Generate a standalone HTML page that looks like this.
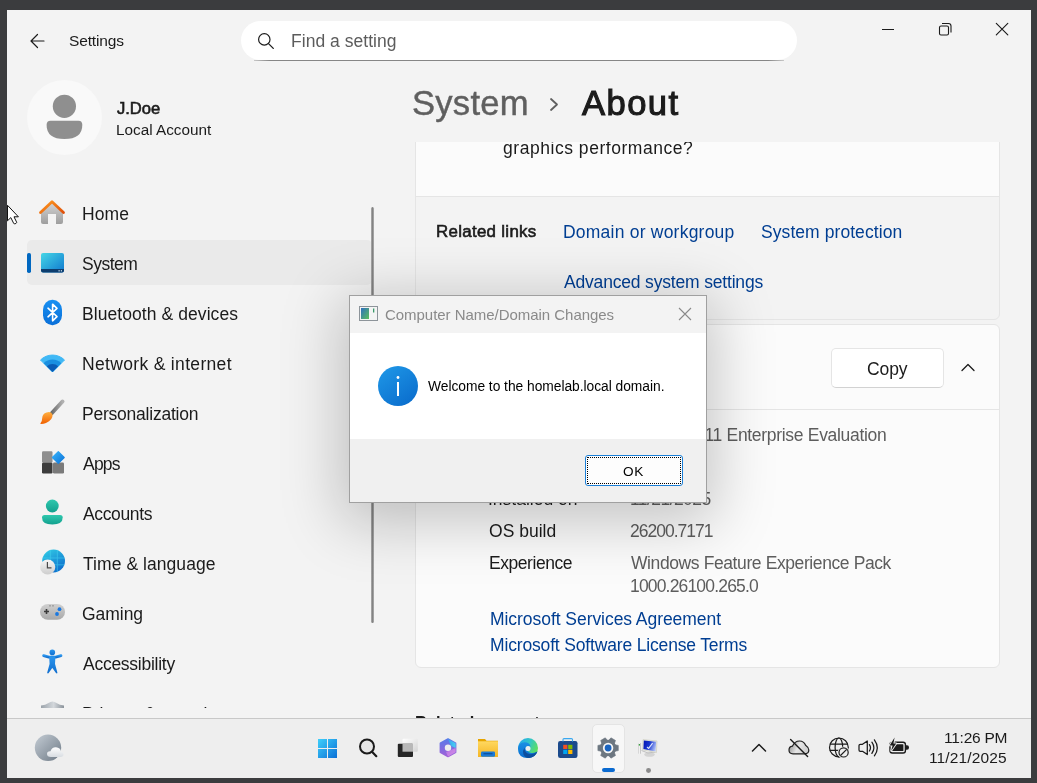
<!DOCTYPE html><html><head><meta charset="utf-8"><style>
html,body{margin:0;padding:0;}
body{width:1037px;height:783px;background:#3b3c3e;position:relative;overflow:hidden;font-family:"Liberation Sans", sans-serif;}
.t{position:absolute;white-space:nowrap;will-change:transform;}
</style></head><body>
<div style="position:absolute;left:7px;top:10px;width:1024px;height:768px;background:#f3f3f3;"></div>
<svg style="position:absolute;left:28px;top:32px;" width="18" height="18" viewBox="0 0 18 18"><path d="M3 9 H16 M3 9 L9.5 2.5 M3 9 L9.5 15.5" stroke="#1b1b1b" stroke-width="1.2" fill="none" stroke-linecap="round"/></svg>
<div class="t" style="left:69.20px;top:33px;font-size:15.5px;line-height:15.5px;color:#1b1b1b;font-weight:400;letter-spacing:-0.143px;">Settings</div>
<div style="position:absolute;left:241px;top:21px;width:556px;height:39px;background:#ffffff;border-radius:19.5px;"></div>
<div style="position:absolute;left:254px;top:60px;width:530px;height:1px;background:linear-gradient(90deg,#c8c8c8,#868686 3%,#868686 97%,#c8c8c8);"></div>
<svg style="position:absolute;left:256px;top:31px;" width="20" height="20" viewBox="0 0 20 20"><circle cx="8.3" cy="8.4" r="5.7" stroke="#1b1b1b" stroke-width="1.2" fill="none"/><path d="M12.5 12.6 L17.3 17.4" stroke="#1b1b1b" stroke-width="1.3" stroke-linecap="round"/></svg>
<div class="t" style="left:291.00px;top:33px;font-size:17.5px;line-height:17.5px;color:#5c5c5c;font-weight:400;letter-spacing:0.038px;">Find a setting</div>
<div style="position:absolute;left:882px;top:29px;width:12px;height:1px;background:#1b1b1b;"></div>
<svg style="position:absolute;left:936px;top:20px;" width="18" height="18" viewBox="0 0 18 18"><rect x="3.5" y="6" width="9" height="9" rx="1.5" stroke="#1b1b1b" stroke-width="1.1" fill="none"/><path d="M6 3.5 H12.5 Q15 3.5 15 6 V12.5" stroke="#1b1b1b" stroke-width="1.1" fill="none"/></svg>
<svg style="position:absolute;left:994px;top:21px;" width="16" height="16" viewBox="0 0 16 16"><path d="M2.3 2.3 L13.8 13.8 M13.8 2.3 L2.3 13.8" stroke="#1b1b1b" stroke-width="1.15" stroke-linecap="round"/></svg>
<div style="position:absolute;left:27px;top:80px;width:75px;height:75px;background:#f9f9f9;border-radius:50%;"></div>
<svg style="position:absolute;left:27px;top:80px;" width="75" height="75" viewBox="0 0 75 75"><circle cx="37.4" cy="26.3" r="11.6" fill="#8f8f8f"/><path d="M19.6 45 Q19.6 40.7 23.5 40.7 H51.5 Q55.3 40.7 55.3 45 Q55.3 59 37.4 59 Q19.6 59 19.6 45 Z" fill="#8f8f8f"/></svg>
<div class="t" style="left:117.30px;top:101px;font-size:16.6px;line-height:16.6px;color:#1b1b1b;font-weight:400;letter-spacing:-0.050px;-webkit-text-stroke:0.6px #1b1b1b;">J.Doe</div>
<div class="t" style="left:116.40px;top:122px;font-size:15.3px;line-height:15.3px;color:#1b1b1b;font-weight:400;">Local Account</div>
<div style="position:absolute;left:27px;top:240px;width:345px;height:45px;background:#eaeaea;border-radius:5px;"></div>
<div style="position:absolute;left:27px;top:253px;width:3.5px;height:20px;background:#0067c0;border-radius:1.75px;"></div>
<div style="position:absolute;left:0;top:0;width:380px;height:708px;overflow:hidden">
<div class="t" style="left:82.00px;top:206px;font-size:17.5px;line-height:17.5px;color:#1b1b1b;font-weight:400;letter-spacing:0.100px;">Home</div>
<div class="t" style="left:82.00px;top:256px;font-size:17.5px;line-height:17.5px;color:#1b1b1b;font-weight:400;letter-spacing:-0.500px;">System</div>
<div class="t" style="left:82.00px;top:306px;font-size:17.5px;line-height:17.5px;color:#1b1b1b;font-weight:400;letter-spacing:0.072px;">Bluetooth &amp; devices</div>
<div class="t" style="left:82.00px;top:356px;font-size:17.5px;line-height:17.5px;color:#1b1b1b;font-weight:400;letter-spacing:0.329px;">Network &amp; internet</div>
<div class="t" style="left:82.00px;top:406px;font-size:17.5px;line-height:17.5px;color:#1b1b1b;font-weight:400;letter-spacing:-0.229px;">Personalization</div>
<div class="t" style="left:83.00px;top:456px;font-size:17.5px;line-height:17.5px;color:#1b1b1b;font-weight:400;letter-spacing:-0.767px;">Apps</div>
<div class="t" style="left:83.00px;top:506px;font-size:17.5px;line-height:17.5px;color:#1b1b1b;font-weight:400;letter-spacing:-0.371px;">Accounts</div>
<div class="t" style="left:83.00px;top:556px;font-size:17.5px;line-height:17.5px;color:#1b1b1b;font-weight:400;letter-spacing:0.057px;">Time &amp; language</div>
<div class="t" style="left:82.00px;top:606px;font-size:17.5px;line-height:17.5px;color:#1b1b1b;font-weight:400;letter-spacing:-0.040px;">Gaming</div>
<div class="t" style="left:83.00px;top:656px;font-size:17.5px;line-height:17.5px;color:#1b1b1b;font-weight:400;letter-spacing:-0.258px;">Accessibility</div>
<div class="t" style="left:82.00px;top:706px;font-size:17.5px;line-height:17.5px;color:#1b1b1b;font-weight:400;">Privacy &amp; security</div>
</div>
<div style="position:absolute;left:371px;top:207px;width:3px;height:416px;background:linear-gradient(90deg,#bdbdbd,#838383 35%,#838383 65%,#bdbdbd);border-radius:1.5px;"></div>
<div class="t" style="left:411.70px;top:86px;font-size:34.6px;line-height:34.6px;color:#5f5f5f;font-weight:400;letter-spacing:0.260px;-webkit-text-stroke:0.45px #5f5f5f;">System</div>
<svg style="position:absolute;left:547px;top:96px;" width="14" height="16" viewBox="0 0 14 16"><path d="M4 3 L10 8.5 L4 14" stroke="#5f5f5f" stroke-width="1.8" fill="none" stroke-linecap="round" stroke-linejoin="round"/></svg>
<div class="t" style="left:582.10px;top:86px;font-size:34.6px;line-height:34.6px;color:#1b1b1b;font-weight:400;letter-spacing:1.425px;-webkit-text-stroke:1.1px #1b1b1b;">About</div>
<div style="position:absolute;left:380px;top:142px;width:651px;height:576px;overflow:hidden">
<div style="position:absolute;left:-380px;top:-142px;width:1037px;height:783px">
<div style="position:absolute;left:415px;top:100px;width:585px;height:220px;background:#f3f3f3;border:1px solid #e5e5e5;border-radius:6px;box-sizing:border-box;"></div>
<div style="position:absolute;left:416px;top:101px;width:583px;height:95px;background:#fbfbfb;"></div>
<div style="position:absolute;left:416px;top:196px;width:583px;height:1px;background:#e5e5e5;"></div>
<div class="t" style="left:503.20px;top:140px;font-size:17.5px;line-height:17.5px;color:#1b1b1b;font-weight:400;letter-spacing:0.540px;">graphics performance?</div>
<div class="t" style="left:436.10px;top:224px;font-size:16.9px;line-height:16.9px;color:#1b1b1b;font-weight:400;letter-spacing:0.300px;-webkit-text-stroke:0.6px #1b1b1b;">Related links</div>
<div class="t" style="left:562.50px;top:224px;font-size:17.5px;line-height:17.5px;color:#003e92;font-weight:400;letter-spacing:0.222px;">Domain or workgroup</div>
<div class="t" style="left:761.40px;top:224px;font-size:17.5px;line-height:17.5px;color:#003e92;font-weight:400;letter-spacing:0.069px;">System protection</div>
<div class="t" style="left:563.50px;top:274px;font-size:17.5px;line-height:17.5px;color:#003e92;font-weight:400;letter-spacing:-0.178px;">Advanced system settings</div>
<div style="position:absolute;left:415px;top:324px;width:585px;height:344px;background:#fbfbfb;border:1px solid #e5e5e5;border-radius:6px;box-sizing:border-box;"></div>
<div style="position:absolute;left:416px;top:409px;width:583px;height:1px;background:#e5e5e5;"></div>
<div style="position:absolute;left:831px;top:348px;width:113px;height:40px;background:#ffffff;border:1px solid #e5e5e5;border-bottom-color:#d2d2d2;border-radius:5px;box-sizing:border-box;"></div>
<div class="t" style="left:867.30px;top:361px;font-size:17.5px;line-height:17.5px;color:#1b1b1b;font-weight:400;letter-spacing:-0.100px;">Copy</div>
<svg style="position:absolute;left:958px;top:358px;" width="20" height="18" viewBox="0 0 20 18"><path d="M4 12.5 L10 6.5 L16 12.5" stroke="#1b1b1b" stroke-width="1.3" fill="none" stroke-linecap="round" stroke-linejoin="round"/></svg>
<div class="t" style="left:488.60px;top:427px;font-size:17.5px;line-height:17.5px;color:#1b1b1b;font-weight:400;">Edition</div>
<div class="t" style="left:631.40px;top:427px;font-size:17.5px;line-height:17.5px;color:#5d5d5d;font-weight:400;letter-spacing:-0.306px;">Windows 11 Enterprise Evaluation</div>
<div class="t" style="left:489.60px;top:459px;font-size:17.5px;line-height:17.5px;color:#1b1b1b;font-weight:400;">Version</div>
<div class="t" style="left:630.40px;top:459px;font-size:17.5px;line-height:17.5px;color:#5d5d5d;font-weight:400;">25H2</div>
<div class="t" style="left:487.60px;top:491px;font-size:17.5px;line-height:17.5px;color:#1b1b1b;font-weight:400;">Installed on</div>
<div class="t" style="left:630.40px;top:491px;font-size:17.5px;line-height:17.5px;color:#5d5d5d;font-weight:400;letter-spacing:-0.567px;">11/21/2025</div>
<div class="t" style="left:488.60px;top:523px;font-size:17.5px;line-height:17.5px;color:#1b1b1b;font-weight:400;letter-spacing:0.014px;">OS build</div>
<div class="t" style="left:630.40px;top:523px;font-size:17.5px;line-height:17.5px;color:#5d5d5d;font-weight:400;letter-spacing:-1.000px;">26200.7171</div>
<div class="t" style="left:488.60px;top:555px;font-size:17.5px;line-height:17.5px;color:#1b1b1b;font-weight:400;letter-spacing:-0.444px;">Experience</div>
<div class="t" style="left:631.40px;top:555px;font-size:17.5px;line-height:17.5px;color:#5d5d5d;font-weight:400;letter-spacing:-0.400px;">Windows Feature Experience Pack</div>
<div class="t" style="left:630.40px;top:578px;font-size:17.5px;line-height:17.5px;color:#5d5d5d;font-weight:400;letter-spacing:-0.827px;">1000.26100.265.0</div>
<div class="t" style="left:490.00px;top:611px;font-size:17.5px;line-height:17.5px;color:#003e92;font-weight:400;letter-spacing:-0.052px;">Microsoft Services Agreement</div>
<div class="t" style="left:490.00px;top:637px;font-size:17.5px;line-height:17.5px;color:#003e92;font-weight:400;letter-spacing:-0.161px;">Microsoft Software License Terms</div>
<div class="t" style="left:415.20px;top:714px;font-size:16.4px;line-height:16.4px;color:#1b1b1b;font-weight:700;">Related support</div>
</div></div>
<div style="position:absolute;left:349px;top:295px;width:358px;height:208px;box-shadow:0 12px 56px 8px rgba(0,0,0,0.22);"></div>
<div style="position:absolute;left:349px;top:295px;width:358px;height:208px;background:#f0f0f0;border:1px solid #a0a0a0;box-sizing:border-box;"></div>
<div style="position:absolute;left:350px;top:296px;width:356px;height:37px;background:#f3f3f3;"></div>
<div style="position:absolute;left:350px;top:333px;width:356px;height:106px;background:#ffffff;"></div>
<svg style="position:absolute;left:359px;top:306px;" width="19" height="15" viewBox="0 0 19 15"><rect x="0.5" y="0.5" width="18" height="14" fill="#f4f4f4" stroke="#8d949a"/><defs><linearGradient id="dg" x1="0" y1="0" x2="1" y2="1"><stop offset="0" stop-color="#2f6fc0"/><stop offset="1" stop-color="#5bbf5a"/></linearGradient></defs><rect x="2" y="2" width="8" height="11" fill="url(#dg)"/><rect x="14" y="2.5" width="1.3" height="4" fill="#3a9a6a"/></svg>
<div class="t" style="left:385.30px;top:307px;font-size:15px;line-height:15px;color:#8a8a8a;font-weight:400;letter-spacing:-0.037px;">Computer Name/Domain Changes</div>
<svg style="position:absolute;left:677px;top:306px;" width="16" height="16" viewBox="0 0 16 16"><path d="M2 2 L14 14 M14 2 L2 14" stroke="#8a8a8a" stroke-width="1.1"/></svg>
<svg style="position:absolute;left:377px;top:365px;" width="42" height="42" viewBox="0 0 42 42"><defs><linearGradient id="ig" x1="0.15" y1="0" x2="0.85" y2="1"><stop offset="0" stop-color="#1e96e6"/><stop offset="1" stop-color="#0a6ccc"/></linearGradient></defs><circle cx="21" cy="21" r="20" fill="url(#ig)"/><circle cx="21" cy="12.5" r="1.4" fill="#fff"/><rect x="20" y="17" width="2" height="14" fill="#fff"/></svg>
<div class="t" style="left:428.30px;top:380px;font-size:13.8px;line-height:13.8px;color:#000000;font-weight:400;letter-spacing:-0.029px;">Welcome to the homelab.local domain.</div>
<div style="position:absolute;left:585px;top:455px;width:98px;height:31px;background:#fdfdfd;border:1px solid #1a7fd8;border-radius:3px;box-sizing:border-box;"></div>
<div style="position:absolute;left:587px;top:457px;width:94px;height:27px;border:1px dotted #000;border-radius:1px;box-sizing:border-box;"></div>
<div class="t" style="left:623.20px;top:465px;font-size:13.6px;line-height:13.6px;color:#000000;font-weight:400;letter-spacing:0.800px;">OK</div>
<div style="position:absolute;left:7px;top:718px;width:1024px;height:60px;background:#eeeeee;"></div>
<div style="position:absolute;left:7px;top:718px;width:1024px;height:1px;background:#c8c8c8;"></div>
<div class="t" style="left:944.30px;top:730px;font-size:15.5px;line-height:15.5px;color:#1b1b1b;font-weight:400;letter-spacing:-0.257px;">11:26 PM</div>
<div class="t" style="left:929.30px;top:750px;font-size:15.5px;line-height:15.5px;color:#1b1b1b;font-weight:400;letter-spacing:0.133px;">11/21/2025</div>
<svg style="position:absolute;left:38px;top:199px;" width="28" height="28" viewBox="0 0 28 28"><defs><linearGradient id="hb" x1="0" y1="0" x2="0" y2="1"><stop offset="0" stop-color="#d4d4d4"/><stop offset="1" stop-color="#9e9e9e"/></linearGradient><linearGradient id="hr" x1="0" y1="0" x2="1" y2="1"><stop offset="0" stop-color="#ff9a1f"/><stop offset="1" stop-color="#e0500a"/></linearGradient></defs><path d="M3 13 L14 3.5 L25 13 V23 Q25 25 23 25 H18 V15 H10 V25 H5 Q3 25 3 23 Z" fill="url(#hb)"/><path d="M2.5 13.5 L14 2.8 L25.5 13.5" stroke="url(#hr)" stroke-width="2.8" fill="none" stroke-linecap="round" stroke-linejoin="round"/></svg>
<svg style="position:absolute;left:40px;top:252px;" width="26" height="22" viewBox="0 0 26 22"><defs><linearGradient id="sy" x1="0" y1="0" x2="1" y2="1"><stop offset="0" stop-color="#45d6e6"/><stop offset="1" stop-color="#0f78cf"/></linearGradient></defs><rect x="1" y="1" width="23" height="19.5" rx="2" fill="url(#sy)"/><path d="M1 17 H24 V18.5 Q24 20.5 22 20.5 H3 Q1 20.5 1 18.5 Z" fill="#0d3d6e"/><rect x="18.5" y="18.2" width="1.2" height="1.2" fill="#cfe6f5"/><rect x="20.8" y="18.2" width="1.2" height="1.2" fill="#cfe6f5"/></svg>
<svg style="position:absolute;left:42px;top:299px;" width="22" height="28" viewBox="0 0 22 28"><defs><linearGradient id="bt" x1="0" y1="0" x2="0" y2="1"><stop offset="0" stop-color="#1890f2"/><stop offset="1" stop-color="#0a6fd8"/></linearGradient></defs><rect x="1" y="0.8" width="19" height="25.5" rx="9.3" ry="10" fill="url(#bt)"/><path d="M6 9.2 L15 17.6 L10.6 21.8 V5.2 L15 9.4 L6 17.8" stroke="#fff" stroke-width="1.6" fill="none" stroke-linejoin="round" stroke-linecap="round"/></svg>
<svg style="position:absolute;left:38px;top:352px;" width="29" height="22" viewBox="0 0 29 22"><path d="M14.5 20 L2.5 8 A17 17 0 0 1 26.5 8 Z" fill="#40b8f5" stroke="#40b8f5" stroke-width="1" stroke-linejoin="round"/><path d="M14.5 20 L5.66 11.16 A12.5 12.5 0 0 1 23.34 11.16 Z" fill="#1a8fe0"/><path d="M14.5 20 L8.84 14.34 A8 8 0 0 1 20.16 14.34 Z" fill="#0b5cb5"/></svg>
<svg style="position:absolute;left:38px;top:398px;" width="28" height="28" viewBox="0 0 28 28"><defs><linearGradient id="bh" x1="0" y1="0" x2="1" y2="0"><stop offset="0" stop-color="#6a6a6a"/><stop offset="1" stop-color="#b0b0b0"/></linearGradient><linearGradient id="bo" x1="0" y1="0" x2="0" y2="1"><stop offset="0" stop-color="#ffb040"/><stop offset="1" stop-color="#f06000"/></linearGradient></defs><path d="M24.5 3.5 L13.5 15.5" stroke="url(#bh)" stroke-width="4" stroke-linecap="round"/><path d="M8.5 14.5 Q13 13 14.5 16.5 Q15 22 8 25 Q4.5 26.2 2.2 25.8 Q4.2 24 4.2 20 Q4.5 15.8 8.5 14.5 Z" fill="url(#bo)"/></svg>
<svg style="position:absolute;left:40px;top:449px;" width="28" height="28" viewBox="0 0 28 28"><defs><linearGradient id="ad" x1="0" y1="0" x2="1" y2="1"><stop offset="0" stop-color="#38b4fa"/><stop offset="1" stop-color="#0a72d8"/></linearGradient></defs><rect x="2" y="2.3" width="10.5" height="11.2" rx="1.2" fill="#8e8e8e"/><rect x="2" y="13.5" width="10.5" height="11" rx="1.2" fill="#3c3c3c"/><rect x="13" y="13.5" width="11" height="11" rx="1.2" fill="#7a7a7a"/><path d="M18.3 2.6 L24.2 8.5 L18.3 14.4 L12.4 8.5 Z" fill="url(#ad)" stroke="url(#ad)" stroke-width="1.2" stroke-linejoin="round"/></svg>
<svg style="position:absolute;left:40px;top:497px;" width="26" height="30" viewBox="0 0 26 30"><defs><linearGradient id="ac" x1="0" y1="0" x2="0" y2="1"><stop offset="0" stop-color="#2fc8ae"/><stop offset="1" stop-color="#12a08e"/></linearGradient></defs><circle cx="12.3" cy="9" r="6.4" fill="url(#ac)"/><path d="M2 20.5 Q2 18 4.5 18 H20.2 Q22.7 18 22.7 20.5 Q22.7 27.5 12.3 27.5 Q2 27.5 2 20.5 Z" fill="url(#ac)"/></svg>
<svg style="position:absolute;left:40px;top:547px;" width="28" height="28" viewBox="0 0 28 28"><defs><linearGradient id="gl" x1="0.2" y1="0" x2="0.8" y2="1"><stop offset="0" stop-color="#30c8e4"/><stop offset="1" stop-color="#0b68cc"/></linearGradient><linearGradient id="cl" x1="0" y1="0" x2="0" y2="1"><stop offset="0" stop-color="#f6f6f6"/><stop offset="1" stop-color="#cdcdcd"/></linearGradient></defs><circle cx="13.6" cy="14" r="11.4" fill="url(#gl)"/><path d="M10.3 2.8 V25.2 M17.3 2.8 V25.2 M2.4 11 H24.8 M2.4 17.8 H24.8" stroke="#48d8f4" stroke-width="0.9" opacity="0.55"/><circle cx="7.7" cy="20" r="7.6" fill="url(#cl)"/><path d="M7.4 15 V20.8 H11.5" stroke="#4a4a4a" stroke-width="1.2" fill="none"/></svg>
<svg style="position:absolute;left:38px;top:601px;" width="30" height="22" viewBox="0 0 30 22"><defs><linearGradient id="gm" x1="0" y1="0" x2="0" y2="1"><stop offset="0" stop-color="#d0d0d0"/><stop offset="1" stop-color="#a8a8a8"/></linearGradient></defs><rect x="2" y="3" width="25" height="15.8" rx="7.9" fill="url(#gm)"/><path d="M8.5 8 V13 M6 10.5 H11" stroke="#3a3a3a" stroke-width="1.6"/><circle cx="21.5" cy="8.2" r="1.9" fill="#1a78e0"/><circle cx="19" cy="13" r="1.9" fill="#1a78e0"/><circle cx="12" cy="4.8" r="0.6" fill="#555"/><circle cx="15" cy="4.8" r="0.6" fill="#555"/></svg>
<svg style="position:absolute;left:40px;top:647px;" width="26" height="30" viewBox="0 0 26 30"><defs><linearGradient id="axg" x1="0" y1="0" x2="0" y2="1"><stop offset="0" stop-color="#2a94ec"/><stop offset="1" stop-color="#1270d0"/></linearGradient></defs><circle cx="12.3" cy="5.4" r="2.8" fill="url(#axg)"/><path d="M3.6 8.6 L9 10.2 H15.6 L21 8.6" stroke="url(#axg)" stroke-width="2.8" fill="none" stroke-linecap="round" stroke-linejoin="round"/><path d="M10 10 H14.6 L14.2 17 L16.6 25.6 L12.3 19.5 L8 25.6 L10.4 17 Z" fill="url(#axg)" stroke="url(#axg)" stroke-width="1.6" stroke-linejoin="round"/></svg>
<div style="position:absolute;left:38px;top:696px;width:30px;height:12px;overflow:hidden">
<svg style="position:absolute;left:0px;top:0px;" width="30" height="30" viewBox="0 0 30 30"><defs><linearGradient id="sh" x1="0" y1="0" x2="1" y2="0"><stop offset="0" stop-color="#9aa2aa"/><stop offset="0.55" stop-color="#d4d8dc"/><stop offset="1" stop-color="#8a929a"/></linearGradient></defs><path d="M3 9.5 Q7.5 9.3 10.5 7 Q14.5 4 18.5 7 Q21.5 9.3 26 9.5 V16 Q26 26 14.5 29 Q3 26 3 16 Z" fill="url(#sh)"/></svg>
</div>
<svg style="position:absolute;left:33px;top:733px;" width="32" height="28" viewBox="0 0 32 28"><defs><linearGradient id="wm" x1="0" y1="0" x2="1" y2="1"><stop offset="0" stop-color="#c4ccd4"/><stop offset="1" stop-color="#6e7a86"/></linearGradient><linearGradient id="wc" x1="0" y1="0" x2="0" y2="1"><stop offset="0" stop-color="#ffffff"/><stop offset="1" stop-color="#d8dde2"/></linearGradient></defs><circle cx="15" cy="14.8" r="13.2" fill="url(#wm)"/><path d="M18 24 Q14 24 14 21 Q14 18 17.5 18.2 Q18.8 14 23 14.2 Q27.5 14.5 28 18.5 Q30.5 19 30.5 21.3 Q30.5 24 27.5 24 Z" fill="url(#wc)"/></svg>
<svg style="position:absolute;left:318px;top:739px;" width="20" height="20" viewBox="0 0 20 20"><defs><linearGradient id="w1" gradientUnits="userSpaceOnUse" x1="0" y1="0" x2="19" y2="19"><stop offset="0" stop-color="#3fd0fb"/><stop offset="1" stop-color="#0a6fd6"/></linearGradient></defs><rect x="0" y="0" width="9" height="9" fill="url(#w1)"/><rect x="10" y="0" width="9" height="9" fill="url(#w1)"/><rect x="0" y="10" width="9" height="9" fill="url(#w1)"/><rect x="10" y="10" width="9" height="9" fill="url(#w1)"/></svg>
<svg style="position:absolute;left:357px;top:737px;" width="22" height="22" viewBox="0 0 22 22"><circle cx="10" cy="9.5" r="7" fill="#e6e6e6" stroke="#1b1b1b" stroke-width="2"/><path d="M15 14.8 L19.3 19.2" stroke="#1b1b1b" stroke-width="2.2" stroke-linecap="round"/></svg>
<svg style="position:absolute;left:396px;top:737px;" width="24" height="22" viewBox="0 0 24 22"><defs><linearGradient id="tv" x1="0" y1="0" x2="1" y2="1"><stop offset="0" stop-color="#ffffff"/><stop offset="1" stop-color="#d4d4d4"/></linearGradient></defs><rect x="6.5" y="1.7" width="15.3" height="13" rx="1" fill="url(#tv)"/><rect x="1.8" y="6.7" width="15.2" height="13.3" rx="1" fill="#262626"/><rect x="6.5" y="6.7" width="10.5" height="8" fill="#b8b8b8"/></svg>
<svg style="position:absolute;left:438px;top:737px;" width="20" height="22" viewBox="0 0 20 22"><defs><linearGradient id="cpa" x1="0" y1="0" x2="0" y2="1"><stop offset="0" stop-color="#5a7ae8"/><stop offset="1" stop-color="#a060d8"/></linearGradient><linearGradient id="cpb" x1="0" y1="0" x2="1" y2="0"><stop offset="0" stop-color="#3aa0f0"/><stop offset="1" stop-color="#48d0f0"/></linearGradient><linearGradient id="cpc" x1="0" y1="0" x2="1" y2="1"><stop offset="0" stop-color="#b070e0"/><stop offset="1" stop-color="#d890e8"/></linearGradient></defs><path d="M10 2 L17.6 6.3 V15.2 L10 19.5 L2.4 15.2 V6.3 Z" fill="url(#cpa)" stroke="url(#cpa)" stroke-width="1.6" stroke-linejoin="round"/><path d="M10 2 L17.6 6.3 V11 L13 9 Z" fill="url(#cpb)"/><path d="M17.6 11 V15.2 L10 19.5 L8 15 Z" fill="url(#cpc)"/><circle cx="10" cy="10.8" r="3.2" fill="#eeeeee"/></svg>
<svg style="position:absolute;left:477px;top:738px;" width="22" height="20" viewBox="0 0 22 20"><defs><linearGradient id="fo" x1="0" y1="0" x2="0" y2="1"><stop offset="0" stop-color="#ffd860"/><stop offset="1" stop-color="#f5b624"/></linearGradient></defs><path d="M1 1 H8 L9.5 2.8 H21 V18.8 H1 Z" fill="#e6a400"/><rect x="1" y="3.3" width="20" height="15.5" fill="url(#fo)"/><rect x="4" y="13.6" width="14" height="5.2" rx="1.2" fill="#1a7ad6"/><rect x="6.5" y="15.2" width="9" height="1.1" fill="#0c4a94"/></svg>
<svg style="position:absolute;left:516px;top:737px;" width="24" height="22" viewBox="0 0 24 22"><defs><linearGradient id="eg" x1="0" y1="0.2" x2="1" y2="0.7"><stop offset="0" stop-color="#22a8f0"/><stop offset="0.5" stop-color="#34c8c0"/><stop offset="1" stop-color="#66e44a"/></linearGradient><linearGradient id="eb" x1="0" y1="0" x2="0" y2="1"><stop offset="0" stop-color="#1a90e4"/><stop offset="1" stop-color="#0a6cd0"/></linearGradient></defs><circle cx="12" cy="11" r="10" fill="url(#eg)"/><path d="M2 11.5 Q2.3 5.6 8.6 5.3 Q13.4 5.3 14.6 9.4 Q12.2 8.2 10.6 10.2 Q9.6 13.4 13.4 15.4 Q17.6 16.8 21.4 14.6 Q19 21 12 21 Q2 21 2 11.5 Z" fill="url(#eb)"/><path d="M8.6 10.6 Q8.2 14.6 11.8 16.6 Q16.4 18.4 21.4 14.6 Q19.4 20.2 13.2 20.9 Q8.8 21 7.4 17.2 Q6.4 13.4 8.6 10.6 Z" fill="#0c4e9e"/><circle cx="12" cy="11.4" r="2.5" fill="#eeeeee"/></svg>
<svg style="position:absolute;left:556px;top:737px;" width="24" height="22" viewBox="0 0 24 22"><rect x="2" y="4" width="19.5" height="17" rx="2.2" fill="#1b4a8c"/><path d="M7 4.5 V2.6 Q7 1.6 8 1.6 H15.5 Q16.5 1.6 16.5 2.6 V4.5" stroke="#3aa8f0" stroke-width="1.1" fill="none"/><rect x="7.2" y="7.8" width="4.2" height="4.2" fill="#f25022"/><rect x="12.2" y="7.8" width="4.2" height="4.2" fill="#7fba00"/><rect x="7.2" y="12.8" width="4.2" height="4.2" fill="#00a4ef"/><rect x="12.2" y="12.8" width="4.2" height="4.2" fill="#ffb900"/></svg>
<div style="position:absolute;left:592px;top:723.5px;width:33px;height:49px;background:#f7f7f7;border:1px solid #e4e4e4;border-radius:5px;box-sizing:border-box;"></div>
<svg style="position:absolute;left:597px;top:737px;" width="22" height="22" viewBox="0 0 22 22"><g transform="translate(11.1 11)"><path d="M-3.4 -6 L-2.6 -10.2 H2.6 L3.4 -6 Z" fill="#6d7781" stroke="#6d7781" stroke-width="0.6" stroke-linejoin="round" transform="rotate(30)"/><path d="M-3.4 -6 L-2.6 -10.2 H2.6 L3.4 -6 Z" fill="#6d7781" stroke="#6d7781" stroke-width="0.6" stroke-linejoin="round" transform="rotate(90)"/><path d="M-3.4 -6 L-2.6 -10.2 H2.6 L3.4 -6 Z" fill="#6d7781" stroke="#6d7781" stroke-width="0.6" stroke-linejoin="round" transform="rotate(150)"/><path d="M-3.4 -6 L-2.6 -10.2 H2.6 L3.4 -6 Z" fill="#6d7781" stroke="#6d7781" stroke-width="0.6" stroke-linejoin="round" transform="rotate(210)"/><path d="M-3.4 -6 L-2.6 -10.2 H2.6 L3.4 -6 Z" fill="#6d7781" stroke="#6d7781" stroke-width="0.6" stroke-linejoin="round" transform="rotate(270)"/><path d="M-3.4 -6 L-2.6 -10.2 H2.6 L3.4 -6 Z" fill="#6d7781" stroke="#6d7781" stroke-width="0.6" stroke-linejoin="round" transform="rotate(330)"/><circle r="8.2" fill="#6d7781"/><circle r="5.2" fill="#f7f7f7"/><circle r="3.4" fill="#1a64c0"/></g></svg>
<div style="position:absolute;left:602px;top:768px;width:13px;height:4px;background:#0a6ad0;border-radius:2px;"></div>
<svg style="position:absolute;left:632px;top:733px;" width="32" height="30" viewBox="0 0 32 30"><defs><linearGradient id="vm" x1="0" y1="0.3" x2="1" y2="0.6"><stop offset="0" stop-color="#0818b8"/><stop offset="0.45" stop-color="#1a38d0"/><stop offset="1" stop-color="#b8c8f8"/></linearGradient><linearGradient id="vt" x1="0" y1="0" x2="1" y2="0"><stop offset="0" stop-color="#c8c8c8"/><stop offset="0.5" stop-color="#f4f4f4"/><stop offset="1" stop-color="#b0b0b0"/></linearGradient></defs><path d="M6.2 10.5 Q7.6 9.8 9 10.2 V20.6 Q7.6 21.2 6.2 20.6 Z" fill="url(#vt)"/><rect x="6.8" y="11" width="1.2" height="1.6" fill="#3aa040"/><ellipse cx="17.5" cy="21.6" rx="5.4" ry="2.2" fill="#d4d4d4"/><path d="M9.5 17.5 L16 20 L23 19" stroke="#c0c0c0" stroke-width="1" fill="none"/><path d="M11 6.6 L25 8 L24.4 19.6 L10.6 16.8 Z" fill="#e8e8e0" stroke="#c8c8b8" stroke-width="0.6"/><path d="M11.8 7.6 L24.2 8.8 L23.6 18.6 L11.4 16 Z" fill="url(#vm)"/><path d="M15 14 L16.6 15.4 L20.6 10.2" stroke="#ffffff" stroke-width="1.1" fill="none" opacity="0.85"/></svg>
<div style="position:absolute;left:645.8px;top:767.5px;width:5.2px;height:5px;border-radius:50%;background:#8a8a8a"></div>
<svg style="position:absolute;left:750px;top:741px;" width="18" height="13" viewBox="0 0 18 13"><path d="M2.5 10 L9 3.5 L15.5 10" stroke="#1b1b1b" stroke-width="1.5" fill="none" stroke-linecap="round" stroke-linejoin="round"/></svg>
<svg style="position:absolute;left:786px;top:737px;" width="25" height="22" viewBox="0 0 25 22"><defs><linearGradient id="od" x1="0" y1="0" x2="1" y2="0.3"><stop offset="0" stop-color="#808080"/><stop offset="0.55" stop-color="#e6e6e6"/><stop offset="1" stop-color="#d0d0d0"/></linearGradient></defs><path d="M7 16.8 Q3 16.8 3 13 Q3 9.6 6.4 9.2 Q8.6 4 13.6 4 Q17.8 4 19.6 8.2 Q22.8 10.4 22.8 13 Q22.8 16.8 18.6 16.8 Z" fill="url(#od)" stroke="#1e1e1e" stroke-width="1.2" stroke-linejoin="round"/><path d="M4.6 2.4 L21.6 19.4" stroke="#1b1b1b" stroke-width="1.4" stroke-linecap="round"/></svg>
<svg style="position:absolute;left:827px;top:736px;" width="25" height="24" viewBox="0 0 25 24"><g stroke="#1b1b1b" stroke-width="1.2" fill="none"><circle cx="11.9" cy="11.4" r="9.4"/><ellipse cx="11.9" cy="11.4" rx="3.8" ry="9.4"/><path d="M2.8 8.1 H21 M2.8 14.4 H12"/></g><circle cx="16.6" cy="16.4" r="6" fill="#eeeeee"/><circle cx="16.6" cy="16.4" r="4.6" stroke="#1b1b1b" stroke-width="1.2" fill="none"/><path d="M13.5 19.5 L19.7 13.3" stroke="#1b1b1b" stroke-width="1.2"/></svg>
<svg style="position:absolute;left:857px;top:737px;" width="24" height="22" viewBox="0 0 24 22"><path d="M2 8.6 Q2 7.3 3.3 7.3 H5.5 L10.3 4 V17.6 L5.5 14.3 H3.3 Q2 14.3 2 13 Z" stroke="#1b1b1b" stroke-width="1.25" fill="none" stroke-linejoin="round"/><path d="M12.4 7.6 Q14.6 10.8 12.4 14 M14.9 5.2 Q18.8 10.8 14.9 16.4 M17.4 2.8 Q23.2 10.8 17.4 18.8" stroke="#1b1b1b" stroke-width="1.25" fill="none" stroke-linecap="round"/></svg>
<svg style="position:absolute;left:887px;top:736px;" width="24" height="20" viewBox="0 0 24 20"><rect x="3" y="6.2" width="15.4" height="10.8" rx="2.3" stroke="#1b1b1b" stroke-width="1.4" fill="none"/><rect x="5" y="8.2" width="11.4" height="6.8" rx="0.6" fill="#1b1b1b"/><path d="M19 9.3 H20 Q22 9.3 22 11.5 Q22 13.7 20 13.7 H19 Z" fill="#1b1b1b"/><path d="M7.6 1.6 L2.6 9.4 H5.6 L4.2 14.8 L9.2 7.4 H6.4 Z" fill="#1b1b1b" stroke="#eeeeee" stroke-width="1.8" stroke-linejoin="round" paint-order="stroke"/></svg>
<div style="position:absolute;left:7px;top:200px;width:20px;height:30px;overflow:hidden">
<svg style="position:absolute;left:-6px;top:4px;" width="20" height="26" viewBox="0 0 20 26"><path d="M6.5 1.3 V16.8 L9.8 13.6 L12.6 19.2 Q13.1 20.2 14.1 19.8 L15.1 19.3 Q16 18.8 15.5 17.9 L13 12.8 H17.4 Z" fill="#ffffff" stroke="#111" stroke-width="1" stroke-linejoin="round"/></svg>
</div>
</body></html>
